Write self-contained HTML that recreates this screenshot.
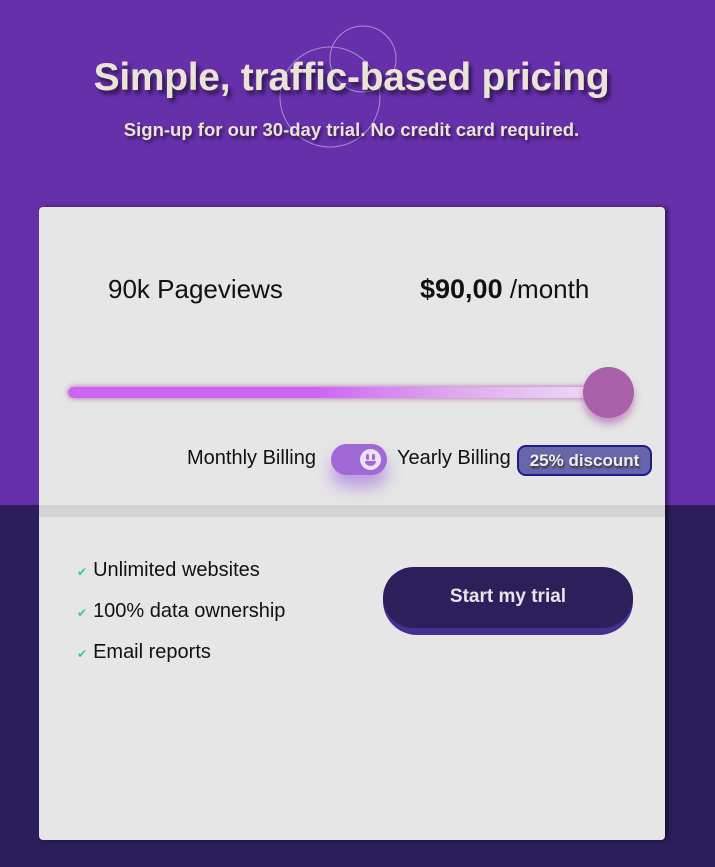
<!DOCTYPE html>
<html><head><meta charset="utf-8"><style>
*{margin:0;padding:0;box-sizing:border-box}
body{width:715px;height:867px;overflow:hidden;font-family:"Liberation Sans",sans-serif;background:#2C1E5A;position:relative}
.top{position:absolute;left:0;top:0;width:715px;height:505px;background:#6730AB}
h1{position:absolute;left:0;width:703px;top:56px;text-align:center;color:#E9E4D6;font-size:39px;font-weight:bold;text-shadow:3px 4px 4px rgba(0,0,0,.55);letter-spacing:-0.3px}
.sub{position:absolute;left:0;width:703px;top:119px;text-align:center;color:#E9E4D6;font-size:18.5px;font-weight:bold;text-shadow:2px 3px 3px rgba(0,0,0,.5)}
.card{position:absolute;left:39px;top:207px;width:626px;height:633px;background:#E6E6E6;border-radius:4px;box-shadow:3px 0 4px rgba(0,0,0,.5)}
.div{position:absolute;left:0;top:298px;width:626px;height:12px;background:#D4D4D4}
.pv{position:absolute;left:69px;top:67px;font-size:26px;color:#111}
.price{position:absolute;left:381px;top:67px;font-size:26px;color:#111}
.price b{font-size:27px}
.track{position:absolute;left:29px;top:180px;width:550px;height:11px;border-radius:6px;background:linear-gradient(90deg,#CE65F2 0%,#CE65F2 45%,#DFA7F0 70%,#F1E3F5 100%);box-shadow:0 0 6px rgba(150,40,150,.7)}
.thumb{position:absolute;left:544px;top:160px;width:51px;height:51px;border-radius:50%;background:#A861A8;box-shadow:0 6px 8px rgba(160,60,160,.5)}
.bill{position:absolute;top:240px;font-size:20px;color:#111}
.tog{position:absolute;left:292px;top:237px;width:56px;height:31px;border-radius:16px;background:#9F6AD6;box-shadow:0 12px 16px rgba(150,80,220,.5)}
.face{position:absolute;right:6px;top:5px;width:21px;height:21px;border-radius:50%;background:#EDE2F3}
.face i{position:absolute;top:5px;width:3px;height:6px;background:#9F6AD6;border-radius:2px}
.face s{position:absolute;left:5px;top:12px;width:11px;height:5px;background:#9F6AD6;border-radius:0 0 6px 6px}
.disc{position:absolute;left:478px;top:238px;width:135px;height:31px;border:2px solid #1E1B8A;border-radius:9px;background:#6667AB;color:#F2EEE6;font-weight:bold;font-size:17px;text-align:center;line-height:27px;text-shadow:1px 2px 2px rgba(0,0,0,.6)}
.feat{position:absolute;left:38px;font-size:20px;color:#111}
.feat span{color:#2BC9B4;font-size:12px;margin-right:6px}
.btn{position:absolute;left:344px;top:360px;width:250px;height:68px;border-radius:34px;background:#45308F}
.btn div{position:absolute;left:0;top:0;width:250px;height:61px;border-radius:31px;background:#2D1F5C;color:#E9E4E6;font-weight:bold;font-size:19px;text-align:center;line-height:60px}
</style></head><body>
<div class="top"></div>
<svg style="position:absolute;left:0;top:0" width="715" height="200"><circle cx="330" cy="97" r="50" fill="none" stroke="#A98BD0" stroke-width="1"/><circle cx="363" cy="59" r="33" fill="none" stroke="#A98BD0" stroke-width="1"/></svg>
<h1>Simple, traffic-based pricing</h1>
<div class="sub">Sign-up for our 30-day trial. No credit card required.</div>
<div class="card">
<div class="pv">90k Pageviews</div>
<div class="price"><b>$90,00</b> /month</div>
<div class="track"></div><div class="thumb"></div>
<div class="bill" style="left:148px">Monthly Billing</div>
<div class="tog"><div class="face"><i style="left:6px"></i><i style="left:12px"></i><s></s></div></div>
<div class="bill" style="left:358px">Yearly Billing</div>
<div class="disc">25% discount</div>
<div class="div"></div>
<div class="feat" style="top:352px"><span>✔</span>Unlimited websites</div>
<div class="feat" style="top:393px"><span>✔</span>100% data ownership</div>
<div class="feat" style="top:434px"><span>✔</span>Email reports</div>
<div class="btn"><div>Start my trial</div></div>
</div>
</body></html>
